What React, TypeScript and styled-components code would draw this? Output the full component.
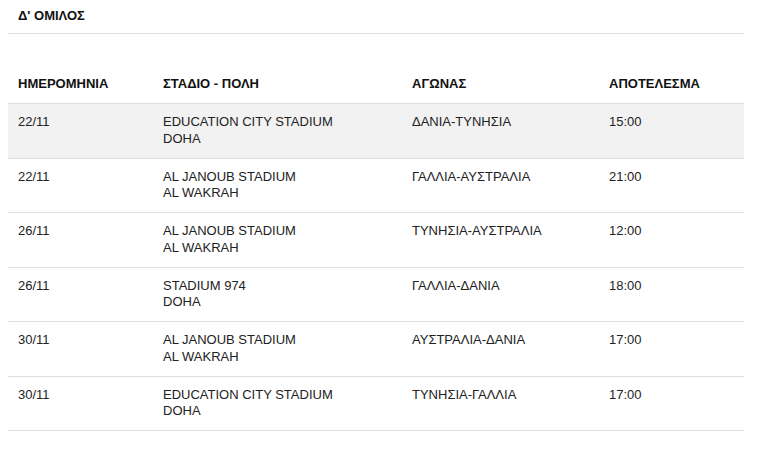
import { FC } from 'react';
import styled, { createGlobalStyle } from 'styled-components';

const GlobalStyle = createGlobalStyle`
  body {
    margin: 0;
    background: #fff;
    font-family: 'Liberation Sans', Arial, sans-serif;
    color: #222;
  }
`;

const Page = styled.div`
  width: 736px;
  padding: 0 21px 0 8px;
`;

const Title = styled.h3`
  margin: 0;
  padding: 8px 10px 0;
  height: 25px;
  font-size: 13px;
  line-height: 15px;
  font-weight: bold;
  color: #111;
  border-bottom: 1px solid #ddd;
`;

const Table = styled.table`
  width: 736px;
  margin-top: 32px;
  border-collapse: collapse;
  table-layout: fixed;
  font-size: 13px;
`;

const HeadCell = styled.th<{ w: number }>`
  box-sizing: border-box;
  width: ${(p) => p.w}px;
  text-align: left;
  font-weight: bold;
  color: #111;
  padding: 10px 10px 11px;
  line-height: 16px;
  border-bottom: 1px solid #ddd;
`;

const Row = styled.tr<{ shaded?: boolean }>`
  background: ${(p) => (p.shaded ? '#f2f2f2' : '#fff')};
  border-bottom: 1px solid #ddd;
`;

const Cell = styled.td`
  vertical-align: top;
  padding: 10px;
  line-height: 16.75px;
  color: #222;
`;

interface iMatch {
  date: string;
  stadium: string;
  city: string;
  game: string;
  result: string;
}

const matches: iMatch[] = [
  { date: '22/11', stadium: 'EDUCATION CITY STADIUM', city: 'DOHA', game: 'ΔΑΝΙΑ-ΤΥΝΗΣΙΑ', result: '15:00' },
  { date: '22/11', stadium: 'AL JANOUB STADIUM', city: 'AL WAKRAH', game: 'ΓΑΛΛΙΑ-ΑΥΣΤΡΑΛΙΑ', result: '21:00' },
  { date: '26/11', stadium: 'AL JANOUB STADIUM', city: 'AL WAKRAH', game: 'ΤΥΝΗΣΙΑ-ΑΥΣΤΡΑΛΙΑ', result: '12:00' },
  { date: '26/11', stadium: 'STADIUM 974', city: 'DOHA', game: 'ΓΑΛΛΙΑ-ΔΑΝΙΑ', result: '18:00' },
  { date: '30/11', stadium: 'AL JANOUB STADIUM', city: 'AL WAKRAH', game: 'ΑΥΣΤΡΑΛΙΑ-ΔΑΝΙΑ', result: '17:00' },
  { date: '30/11', stadium: 'EDUCATION CITY STADIUM', city: 'DOHA', game: 'ΤΥΝΗΣΙΑ-ΓΑΛΛΙΑ', result: '17:00' },
];

const App: FC = () => (
  <>
    <GlobalStyle />
    <Page>
      <Title>Δ' ΟΜΙΛΟΣ</Title>
      <Table>
        <thead>
          <tr>
            <HeadCell w={145}>ΗΜΕΡΟΜΗΝΙΑ</HeadCell>
            <HeadCell w={249}>ΣΤΑΔΙΟ - ΠΟΛΗ</HeadCell>
            <HeadCell w={197}>ΑΓΩΝΑΣ</HeadCell>
            <HeadCell w={145}>ΑΠΟΤΕΛΕΣΜΑ</HeadCell>
          </tr>
        </thead>
        <tbody>
          {matches.map((m, i) => (
            <Row key={i} shaded={i === 0}>
              <Cell>{m.date}</Cell>
              <Cell>
                {m.stadium}
                <br />
                {m.city}
              </Cell>
              <Cell>{m.game}</Cell>
              <Cell>{m.result}</Cell>
            </Row>
          ))}
        </tbody>
      </Table>
    </Page>
  </>
);

export default App;
